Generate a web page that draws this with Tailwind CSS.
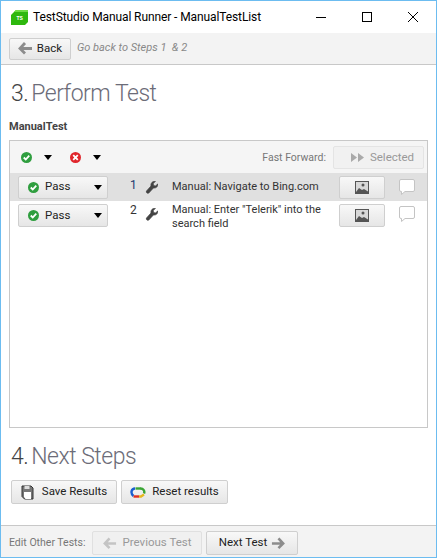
<!DOCTYPE html>
<html lang="en">

<head>
    <meta charset="UTF-8">
    <title>TestStudio Manual Runner</title>
    <script src="https://cdn.jsdelivr.net/npm/@tailwindcss/browser@4"></script>
</head>

<body class="bg-white font-['Roboto',sans-serif] text-[11.5px] text-[#333]">
    <div class="w-[437px] h-[558px] border border-[#6cbcf0] flex flex-col bg-white overflow-hidden">
        <!-- title bar -->
        <div class="h-[32px] flex items-center shrink-0">
            <svg class="ml-[10px] w-[17px] h-[17px]" viewBox="0 0 17 17"><path d="M5 1h12v12l-3 3H0V6z" fill="#2eb80e"/><path d="M5 1h12v2H3z" fill="#6fdc45"/><text x="5.500" y="10.500" font-size="5" font-weight="700" fill="#fff" font-family="Liberation Sans">TS</text></svg>
            <span class="ml-[5px] text-[12px] tracking-[-0.1px] text-black w-[232px] whitespace-nowrap">TestStudio Manual Runner - ManualTestList</span>
            <div class="ml-auto flex items-center">
                <svg class="w-[46px] h-[32px]" viewBox="0 0 46 32"><path d="M18 16.500h10" stroke="#000"/></svg>
                <svg class="w-[46px] h-[32px]" viewBox="0 0 46 32"><rect x="18.500" y="11.500" width="9" height="9" fill="none" stroke="#000"/></svg>
                <svg class="w-[46px] h-[32px]" viewBox="0 0 46 32"><path d="M18 11l10 10M28 11L18 21" stroke="#000"/></svg>
            </div>
        </div>
        <!-- back bar -->
        <div class="h-[32px] shrink-0 bg-[#f3f3f3] border-b border-[#c8c8c8] flex items-center pl-[8px] gap-[6px]">
            <button class="w-[62px] h-[22px] flex items-center justify-center gap-[4px] rounded-[2px] border border-[#cfcfcf] bg-gradient-to-b from-[#f8f8f8] to-[#e6e6e6] text-[#222]">
                <svg class="w-[15px] h-[13px]" viewBox="0 0 15 13"><path d="M7 1L2 6.500l5 5M2 6.500h12" fill="none" stroke="#8c8c8c" stroke-width="2.800"/></svg>
                Back
            </button>
            <span class="italic text-[11px] text-[#888]">Go back to Steps 1 &nbsp;&amp; 2</span>
        </div>

        <main class="flex-1 flex flex-col px-[8px] min-h-0">
            <h2 class="mt-[12px] ml-[2px] h-[34px] text-[23px] tracking-[-0.5px] font-light leading-[34px] text-[#6c6c78]"><span class="text-[#444] mr-[3px]">3.</span>Perform Test</h2>
            <div class="mt-[8px] h-[16px] font-bold text-[11px] leading-[16px] text-[#444]">ManualTest</div>

            <div class="mt-[5px] h-[288px] border border-[#c8c8c8] flex flex-col">
                <div class="h-[32px] shrink-0 bg-[#f5f5f5] flex items-center pl-[11px] pr-[3px]">
                    <svg class="w-[11px] h-[11px]" viewBox="0 0 12 12"><circle cx="6" cy="6" r="6" fill="#2f9e3f"/><path d="M3 6l2.200 2.200L9 4" fill="none" stroke="#fff" stroke-width="2"/></svg>
                    <span class="ml-[12px] border-x-[4px] border-x-transparent border-t-[5px] border-t-black"></span>
                    <svg class="ml-[18px] w-[11px] h-[11px]" viewBox="0 0 12 12"><circle cx="6" cy="6" r="6" fill="#e0262c"/><path d="M3.500 3.500l5 5M8.500 3.500l-5 5" stroke="#fff" stroke-width="2"/></svg>
                    <span class="ml-[12px] border-x-[4px] border-x-transparent border-t-[5px] border-t-black"></span>
                    <span class="ml-auto mt-[1px] text-[10.5px] text-[#777]">Fast Forward:</span>
                    <button class="ml-[7px] mt-[1px] pl-[8px] w-[91px] h-[23px] flex items-center justify-center gap-[6px] rounded-[2px] border border-[#e4e4e4] bg-[#f1f1f1] text-[#999]">
                        <svg class="w-[13px] h-[9px]" viewBox="0 0 13 9"><path d="M0 0l6 4.500L0 9zM7 0l6 4.500L7 9z" fill="#aaa"/></svg>
                        Selected
                    </button>
                </div>

                <div class="h-[28px] shrink-0 bg-[#e0e0e0] flex items-center pl-[8px]">
                    <button class="w-[90px] h-[23px] flex items-center pl-[9px] rounded-[2px] border border-[#cfcfcf] bg-gradient-to-b from-[#f8f8f8] to-[#e6e6e6] text-[#222]">
                        <svg class="w-[11px] h-[11px]" viewBox="0 0 12 12"><circle cx="6" cy="6" r="6" fill="#2f9e3f"/><path d="M3 6l2.200 2.200L9 4" fill="none" stroke="#fff" stroke-width="2"/></svg>
                        <span class="ml-[6px]">Pass</span>
                        <span class="ml-auto mr-[5px] border-x-[4px] border-x-transparent border-t-[5px] border-t-black"></span>
                    </button>
                    <span class="w-[9px] ml-[22px] -mt-[5px] text-[12px] text-[#1c3a6e]">1</span>
                    <svg class="ml-[6px] w-[13px] h-[13px]" viewBox="0 0 13 13"><path d="M12.800 2.800c.5 2.400-1.600 4.700-4.400 4.200L3.800 12c-1 1-3.300-.6-2.300-2L6 5C5.300 2 8 -.2 10.500.300L8.200 2.600l.4 2 2 .4z" fill="#444" stroke="#444" stroke-width=".7"/></svg>
                    <span class="ml-[14px] w-[167px] text-[11px] leading-[14px] text-[#333]">Manual: Navigate to Bing.com</span>
                    <button class="w-[46px] h-[23px] flex items-center justify-center rounded-[2px] border border-[#cfcfcf] bg-gradient-to-b from-[#f8f8f8] to-[#e6e6e6]">
                        <svg class="w-[14px] h-[13px]" viewBox="0 0 14 13"><rect x=".5" y=".5" width="13" height="12" fill="#d8d8d8" stroke="#555"/><circle cx="8" cy="4" r="1.500" fill="#555"/><path d="M1 11l3-4 3 2 2-1 4 2.500V12H1z" fill="#555"/></svg>
                    </button>
                    <svg class="ml-[14px] w-[16px] h-[17px]" viewBox="0 0 16 17"><path d="M2 .5h12a1.500 1.500 0 0 1 1.500 1.500v9a1.500 1.500 0 0 1-1.500 1.500H6l-3.500 3v-3H2A1.500 1.500 0 0 1 .5 11V2A1.500 1.500 0 0 1 2 .5z" fill="#fff" stroke="#c4c4c4"/></svg>
                </div>

                <div class="pt-[2px] flex items-start pl-[8px]">
                    <button class="mt-[1px] w-[90px] h-[23px] flex items-center pl-[9px] rounded-[2px] border border-[#cfcfcf] bg-gradient-to-b from-[#f8f8f8] to-[#e6e6e6] text-[#222]">
                        <svg class="w-[11px] h-[11px]" viewBox="0 0 12 12"><circle cx="6" cy="6" r="6" fill="#2f9e3f"/><path d="M3 6l2.200 2.200L9 4" fill="none" stroke="#fff" stroke-width="2"/></svg>
                        <span class="ml-[6px]">Pass</span>
                        <span class="ml-auto mr-[5px] border-x-[4px] border-x-transparent border-t-[5px] border-t-black"></span>
                    </button>
                    <span class="w-[9px] ml-[22px] leading-[14px] text-[12px] text-[#333]">2</span>
                    <svg class="ml-[6px] mt-[5px] w-[13px] h-[13px]" viewBox="0 0 13 13"><path d="M12.800 2.800c.5 2.400-1.600 4.700-4.400 4.200L3.800 12c-1 1-3.300-.6-2.300-2L6 5C5.300 2 8 -.2 10.500.300L8.200 2.600l.4 2 2 .4z" fill="#444" stroke="#444" stroke-width=".7"/></svg>
                    <span class="ml-[14px] w-[167px] text-[11px] leading-[14px] text-[#333]">Manual: Enter "Telerik" into the search field</span>
                    <button class="mt-[1px] w-[46px] h-[23px] flex items-center justify-center rounded-[2px] border border-[#cfcfcf] bg-gradient-to-b from-[#f8f8f8] to-[#e6e6e6]">
                        <svg class="w-[14px] h-[13px]" viewBox="0 0 14 13"><rect x=".5" y=".5" width="13" height="12" fill="#d8d8d8" stroke="#555"/><circle cx="8" cy="4" r="1.500" fill="#555"/><path d="M1 11l3-4 3 2 2-1 4 2.500V12H1z" fill="#555"/></svg>
                    </button>
                    <svg class="ml-[14px] mt-[3px] w-[16px] h-[17px]" viewBox="0 0 16 17"><path d="M2 .5h12a1.500 1.500 0 0 1 1.500 1.500v9a1.500 1.500 0 0 1-1.500 1.500H6l-3.500 3v-3H2A1.500 1.500 0 0 1 .5 11V2A1.500 1.500 0 0 1 2 .5z" fill="#fff" stroke="#c4c4c4"/></svg>
                </div>
            </div>

            <h2 class="mt-[12px] ml-[2px] h-[34px] text-[23px] tracking-[-0.5px] font-light leading-[34px] text-[#6c6c78]"><span class="text-[#444] mr-[3px]">4.</span>Next Steps</h2>
            <div class="mt-[6px] ml-[2px] flex gap-[4px]">
                <button class="w-[106px] h-[24px] flex items-center justify-center gap-[8px] rounded-[2px] border border-[#cfcfcf] bg-gradient-to-b from-[#f8f8f8] to-[#e6e6e6] text-[#222]">
                    <svg class="w-[13px] h-[15px]" viewBox="0 0 13 15"><path d="M1 1h9l2 2v11H3.500L1 11.500z" fill="#777" stroke="#333"/><rect x="3.500" y="1" width="5" height="3" fill="#ddd"/><path d="M3 7h7v7H4.500L3 12z" fill="#fff"/></svg>
                    Save Results
                </button>
                <button class="w-[107px] h-[24px] flex items-center justify-center gap-[6px] rounded-[2px] border border-[#cfcfcf] bg-gradient-to-b from-[#f8f8f8] to-[#e6e6e6] text-[#222]">
                    <svg class="w-[16px] h-[13px]" viewBox="0 0 16 13"><path d="M5 2.500C1.500 2.500 0 7 3.500 10" fill="none" stroke="#1a5fd0" stroke-width="2.400"/><path d="M5.500 2.500H11" stroke="#3aa535" stroke-width="2.400"/><path d="M10.500 2.500c3 0 4.500 2.500 3.500 5" fill="none" stroke="#3aa535" stroke-width="2.400"/><path d="M3.500 10.500H9" stroke="#e0301e" stroke-width="2.400"/><path d="M9 10.500h2l3-2" fill="none" stroke="#e6b820" stroke-width="2.400"/></svg>
                    Reset results
                </button>
            </div>
        </main>

        <!-- bottom bar -->
        <div class="h-[32px] shrink-0 pt-[3px] bg-[#f3f3f3] border-t border-[#c8c8c8] flex items-center pl-[8px]">
            <span class="w-[83px] text-[10.5px] text-[#777]">Edit Other Tests:</span>
            <button class="w-[110px] h-[24px] flex items-center justify-center gap-[6px] rounded-[2px] border border-[#e0e0e0] bg-[#f0f0f0] text-[#999]">
                <svg class="w-[14px] h-[13px]" viewBox="0 0 15 13"><path d="M7 1L2 6.500l5 5M2 6.500h12" fill="none" stroke="#c4c4c4" stroke-width="2.800"/></svg>
                Previous Test
            </button>
            <button class="ml-[4px] w-[92px] h-[24px] flex items-center justify-center gap-[4px] rounded-[2px] border border-[#cfcfcf] bg-gradient-to-b from-[#f8f8f8] to-[#e6e6e6] text-[#222]">
                Next Test
                <svg class="w-[14px] h-[13px]" viewBox="0 0 15 13"><path d="M8 1l5 5.500-5 5M13 6.500H1" fill="none" stroke="#8c8c8c" stroke-width="2.800"/></svg>
            </button>
        </div>
    </div>
</body>

</html>
